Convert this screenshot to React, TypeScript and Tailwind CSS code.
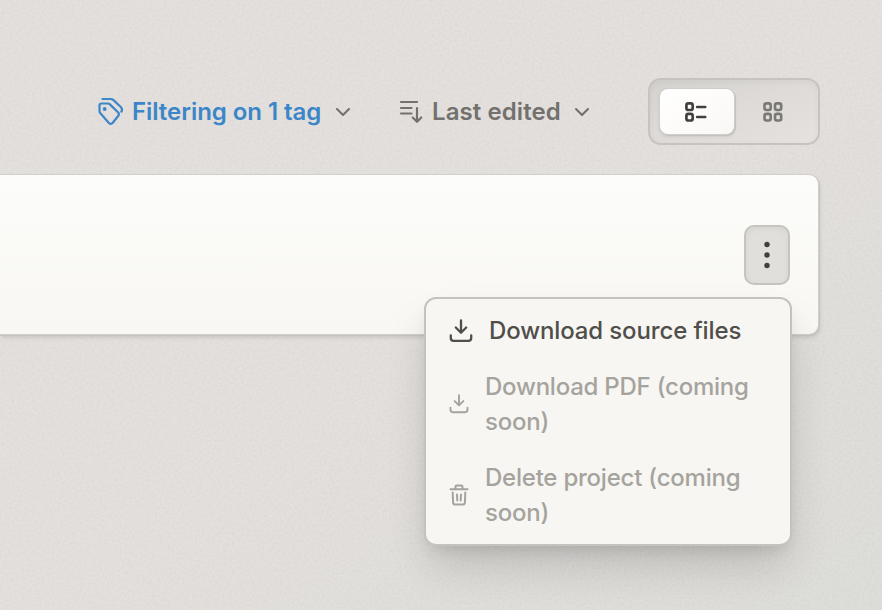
import type { ReactNode } from "react";

function Chevron() {
  return (
    <svg width="16" height="10" viewBox="0 0 16 10" fill="none" stroke="#73716d" strokeWidth="2.100" strokeLinecap="round" strokeLinejoin="round">
      <path d="M2 2 8 8l6-6" />
    </svg>
  );
}

function TagsIcon() {
  return (
    <svg width="27" height="29" viewBox="0 0 26 29" fill="none" stroke="#3b86c8" strokeWidth="2.200" strokeLinecap="round" strokeLinejoin="round">
      <path d="M5 2h8.200c1 0 1.800.3 2.500.9l7.300 6.900c1.700 1.600 2 3 .9 4.800" />
      <path d="M2 8.500c0-1.200.8-2 2-2h6.200c.9 0 1.600.3 2.200.9l8.100 7.800c1.200 1.200 1.200 2.600.1 3.800l-5.300 6.800c-1.200 1.400-2.700 1.400-3.900.1l-8.500-9.600c-.6-.6-.9-1.300-.9-2.100z" />
      <circle cx="7.200" cy="12" r="1.900" fill="#3b86c8" stroke="none" />
    </svg>
  );
}

function SortIcon() {
  return (
    <svg width="24" height="24" viewBox="0 0 24 24" fill="none" stroke="#73716d" strokeWidth="2.200" strokeLinecap="round" strokeLinejoin="round">
      <path d="M2 2h16M2 8h10.500M2 13.500h10.500M18 8v13.500M13.700 17.500l4.300 4.300 4.300-4.300" />
    </svg>
  );
}

function DownloadIcon({ size }: { size: number }) {
  return (
    <svg width={size} height={size} viewBox="0 0 24 24" fill="none" stroke="currentColor" strokeWidth="2.300" strokeLinecap="round" strokeLinejoin="round">
      <path d="M12 1.500v12M6.800 8.500l5.200 5.200 5.200-5.200M1.800 16.300v2.700c0 1.800 1 2.800 2.800 2.800h14.800c1.800 0 2.800-1 2.800-2.800v-2.700" />
    </svg>
  );
}

function TrashIcon() {
  return (
    <svg width="20" height="24" viewBox="0 0 20 24" fill="none" stroke="currentColor" strokeWidth="2" strokeLinecap="round" strokeLinejoin="round">
      <path d="M1.500 6.300h17M6.500 6V3.700c0-.8.4-1.200 1.200-1.200h4.600c.8 0 1.200.4 1.200 1.200V6M3.700 9.500l.4 10.200c.1 1.200.8 1.900 2 1.900h7.800c1.200 0 1.900-.7 2-1.900l.4-10.200M8 11.500l.3 6M12 11.500l-.3 6" />
    </svg>
  );
}

function MenuItem({ icon, children, disabled = false }: { icon: ReactNode; children: ReactNode; disabled?: boolean }) {
  return (
    <div className={disabled ? "flex items-center gap-[16px] pl-[23px] tracking-[-0.23px] text-[#a5a39e]" : "flex items-center gap-[16px] pl-[23px] tracking-[-0.12px] text-[#504e4a]"}>
      {icon}
      <span className="w-[280px] text-[24px] leading-[35px] font-[450]">{children}</span>
    </div>
  );
}

export default function App() {
  return (
    <div className="relative h-[610px] w-[882px] overflow-hidden bg-linear-to-br from-[#e3dfdc] from-50% to-[#dcdcd8] pt-[78px] font-['Inter','Liberation_Sans',sans-serif]">
      <svg className="absolute inset-0 opacity-[0.03]" width="882" height="610">
        <filter id="paper" x="0" y="0" width="100%" height="100%" colorInterpolationFilters="sRGB">
          <feTurbulence type="fractalNoise" baseFrequency="0.4" numOctaves="2" />
          <feColorMatrix type="matrix" values="1.5 0 0 0 0.1 1.5 0 0 0 0.1 1.5 0 0 0 0.1 0 0 0 0 1" />
        </filter>
        <rect width="882" height="610" filter="url(#paper)" />
      </svg>

      <div className="relative flex h-[67px] items-center pl-[97px]">
        <button className="flex w-[302px] items-center">
          <TagsIcon />
          <span className="ml-[8px] w-[203px] text-left text-[24px] font-semibold tracking-[-0.05px] whitespace-nowrap text-[#3b86c8]">Filtering on 1 tag</span>
          <Chevron />
        </button>
        <button className="flex w-[249px] items-center">
          <SortIcon />
          <span className="ml-[9px] w-[142px] text-left text-[24px] font-semibold tracking-[0.08px] whitespace-nowrap text-[#73716d]">Last edited</span>
          <Chevron />
        </button>
        <div className="flex h-[67px] w-[172px] items-center rounded-[13px] border-2 border-[#c6c3c0] bg-linear-to-br from-[#d4d2cf] via-[#dedbd8] to-[#e6e2de] pl-[10px] shadow-[inset_0_2px_6px_rgba(0,0,0,0.04)]">
          <div className="flex h-[45px] w-[74px] items-center justify-center rounded-[8px] bg-linear-to-br from-white to-[#faf8f5] pr-[3px] shadow-[0_0_0_1px_#d0cdca,1px_1px_0_1px_#c4c1be,0_2px_4px_rgba(0,0,0,0.12)]">
            <svg width="22" height="20" viewBox="0 0 22 20" fill="none" stroke="#42403c" strokeWidth="2.700" strokeLinecap="round">
              <rect x="1.400" y="1.400" width="6.300" height="6.600" rx="2" />
              <rect x="1.400" y="11.900" width="6.300" height="6.600" rx="2" />
              <path d="M12.200 5h8M12.200 15h8" />
            </svg>
          </div>
          <div className="flex w-[77px] items-center justify-center">
            <svg width="20" height="20" viewBox="0 0 20 20" fill="none" stroke="#7a7874" strokeWidth="2.600">
              <rect x="1.500" y="1.400" width="6.200" height="6.600" rx="2" />
              <rect x="12" y="1.400" width="6.200" height="6.600" rx="2" />
              <rect x="1.500" y="11.900" width="6.200" height="6.600" rx="2" />
              <rect x="12" y="11.900" width="6.200" height="6.600" rx="2" />
            </svg>
          </div>
        </div>
      </div>

      <div className="relative mt-[30px] flex h-[159px] w-[818px] justify-end rounded-r-[9px] bg-linear-to-b from-[#fcfcfa] to-[#f8f7f3] pt-[50px] pr-[28px] shadow-[0_0_0_1px_#d2d0cc,1px_1px_0_1px_#c5c3bf,1px_3px_5px_rgba(0,0,0,0.14)]">
        <div className="relative h-[60px] w-[46px]">
          <button className="flex h-[60px] w-[46px] items-center justify-center rounded-[10px] border-2 border-[#c5c4c0] bg-[#e0dfdb] shadow-[inset_0_2px_6px_rgba(0,0,0,0.05)]">
            <svg width="6" height="28" viewBox="0 0 6 28" fill="#42403c">
              <circle cx="3" cy="3.500" r="2.700" />
              <circle cx="3" cy="14" r="2.700" />
              <circle cx="3" cy="24.500" r="2.700" />
            </svg>
          </button>
          <div className="absolute top-[72px] -right-[2px] flex h-[249px] w-[368px] flex-col gap-[21px] rounded-[12px] border-2 border-[#c5c3bf] bg-[#f7f6f2] pt-[14px] shadow-[0_24px_44px_-6px_rgba(0,0,0,0.16),0_8px_16px_-6px_rgba(0,0,0,0.12)]">
            <MenuItem icon={<DownloadIcon size={24} />}>Download source files</MenuItem>
            <MenuItem disabled icon={<DownloadIcon size={20} />}>Download PDF (coming soon)</MenuItem>
            <MenuItem disabled icon={<TrashIcon />}>Delete project (coming soon)</MenuItem>
          </div>
        </div>
      </div>
    </div>
  );
}
